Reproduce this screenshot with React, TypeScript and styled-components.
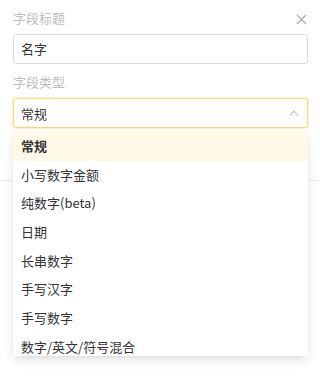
import styled, { createGlobalStyle } from "styled-components";

const GlobalStyle = createGlobalStyle`
    html, body {
        margin: 0;
        padding: 0;
        background: #ffffff;
        font-family: "Noto Sans CJK SC", "Noto Sans", sans-serif;
    }
    #root {
        min-height: 100vh;
    }
`

const options = ["常规", "小写数字金额", "纯数字(beta)", "日期", "长串数字", "手写汉字", "手写数字", "数字/英文/符号混合"]

export default function App() {
    return (
        <>
            <GlobalStyle/>
            <Panel>
                <LabelRow>
                    <Label>字段标题</Label>
                    <CloseButton aria-label="close">
                        <svg width="11" height="11" viewBox="0 0 11 11">
                            <path d="M1 1L10 10M10 1L1 10" stroke="#a8a8a8" strokeWidth="1.1" fill="none"/>
                        </svg>
                    </CloseButton>
                </LabelRow>
                <Input>名字</Input>
                <LabelRow>
                    <Label>字段类型</Label>
                </LabelRow>
                <SelectWrap>
                    <Select>
                        <span>常规</span>
                        <svg width="10" height="6" viewBox="0 0 10 6">
                            <path d="M1 5.5L5 1.2L9 5.5" stroke="#b5b5b5" strokeWidth="1.1" fill="none"/>
                        </svg>
                    </Select>
                    <Dropdown>
                        {options.map((o, i) => (
                            <Option key={o} $active={i === 0}>{o}</Option>
                        ))}
                    </Dropdown>
                </SelectWrap>
                <Divider/>
            </Panel>
        </>
    );
}

const Panel = styled.div`
    box-sizing: border-box;
    min-height: 376px;
    padding: 8px 12px 0 13px;
`

const LabelRow = styled.div`
    display: flex;
    justify-content: space-between;
    align-items: center;
    height: 20px;
    margin-bottom: 6px;
`

const Label = styled.div`
    font-size: 13px;
    line-height: 20px;
    color: #bdbdbd;
`

const CloseButton = styled.div`
    display: flex;
    align-items: center;
    padding-right: 1px;
    padding-top: 2px;
`

const Input = styled.div`
    box-sizing: border-box;
    height: 30px;
    border: 1px solid #dcdcdc;
    border-radius: 3px;
    padding: 0 7px;
    font-size: 13px;
    line-height: 28px;
    color: #333;
    margin-bottom: 8px;
`

const SelectWrap = styled.div`
    position: relative;
    z-index: 2;
`

const Select = styled.div`
    box-sizing: border-box;
    height: 30px;
    border: 1px solid #fcd66f;
    box-shadow: 0 0 0 1px rgba(252, 214, 111, 0.35);
    border-radius: 3px;
    padding: 0 8px 0 7px;
    display: flex;
    justify-content: space-between;
    align-items: center;
    font-size: 13px;
    color: #333;
`

const Dropdown = styled.div`
    position: absolute;
    top: 34px;
    left: 0;
    right: 0;
    height: 224px;
    overflow: hidden;
    background: #fff;
    border-radius: 4px;
    box-shadow: 0 3px 6px -4px rgba(0, 0, 0, 0.12), 0 4px 12px rgba(0, 0, 0, 0.1);
`

const Option = styled.div<{ $active: boolean }>`
    height: 28.7px;
    line-height: 28.7px;
    padding: 0 8px;
    font-size: 13px;
    color: #333;
    font-weight: ${p => p.$active ? 600 : 400};
    background: ${p => p.$active ? "#fef9e6" : "#fff"};
    white-space: nowrap;
`

const Divider = styled.div`
    margin: 52px -12px 0 -13px;
    height: 1px;
    background: #ececec;
`
